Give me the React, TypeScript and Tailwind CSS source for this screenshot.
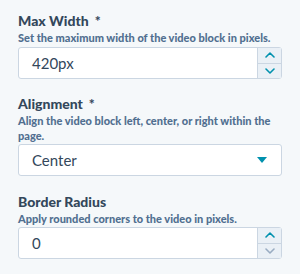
const font = { fontFamily: '"Lato", "Open Sans", sans-serif' };

function Chevron({ up, active }: { up?: boolean; active: boolean }) {
  return (
    <svg width="10" height="6" viewBox="0 0 10 6" className={active ? "text-[#0091ae]" : "text-[#99acc2]"}>
      <path
        d={up ? "M1 5 L5 1 L9 5" : "M1 1 L5 5 L9 1"}
        fill="none"
        stroke="currentColor"
        strokeWidth="1.6"
        strokeLinecap="round"
        strokeLinejoin="round"
      />
    </svg>
  );
}

function Label({ text, required }: { text: string; required?: boolean }) {
  return (
    <div className="text-[14px] font-black leading-[18px] text-[#33475b]">
      {text}
      {required && <span className="ml-[6px]">*</span>}
    </div>
  );
}

function Help({ children }: { children: React.ReactNode }) {
  return <div className="text-[11px] font-black leading-[15px] text-[#516f90]">{children}</div>;
}

function NumberInput({ value, downActive, className }: { value: string; downActive: boolean; className: string }) {
  return (
    <div className={`flex h-[32px] w-[264px] rounded-[3px] border border-[#cbd6e2] bg-white ${className}`}>
      <div className="flex flex-1 items-center pl-[13px] text-[15px] text-[#33475b]">{value}</div>
      <div className="flex w-[24px] flex-col border-l border-[#cbd6e2] bg-[#eaf0f6]">
        <div className="flex flex-1 items-center justify-center border-b border-[#cbd6e2]">
          <Chevron up active />
        </div>
        <div className="flex flex-1 items-center justify-center">
          <Chevron active={downActive} />
        </div>
      </div>
    </div>
  );
}

export default function App() {
  return (
    <div className="h-[274px] w-[300px] bg-[#f5f8fa] px-[18px] pt-[12px]" style={font}>
      <Label text="Max Width" required />
      <Help>Set the maximum width of the video block in pixels.</Help>
      <NumberInput value="420px" downActive className="mt-[2px]" />

      <div className="mt-[16px]">
        <Label text="Alignment" required />
        <Help>Align the video block left, center, or right within the page.</Help>
        <div className="mt-[1px] flex h-[32px] w-[264px] items-center justify-between rounded-[3px] border border-[#cbd6e2] bg-white pl-[13px] pr-[14px]">
          <span className="text-[15px] text-[#33475b]">Center</span>
          <svg width="10" height="6" viewBox="0 0 10 6">
            <path d="M0 0 L10 0 L5 6 Z" fill="#0091ae" />
          </svg>
        </div>
      </div>

      <div className="mt-[17px]">
        <Label text="Border Radius" />
        <Help>Apply rounded corners to the video in pixels.</Help>
        <NumberInput value="0" downActive={false} className="mt-[1px]" />
      </div>
    </div>
  );
}
